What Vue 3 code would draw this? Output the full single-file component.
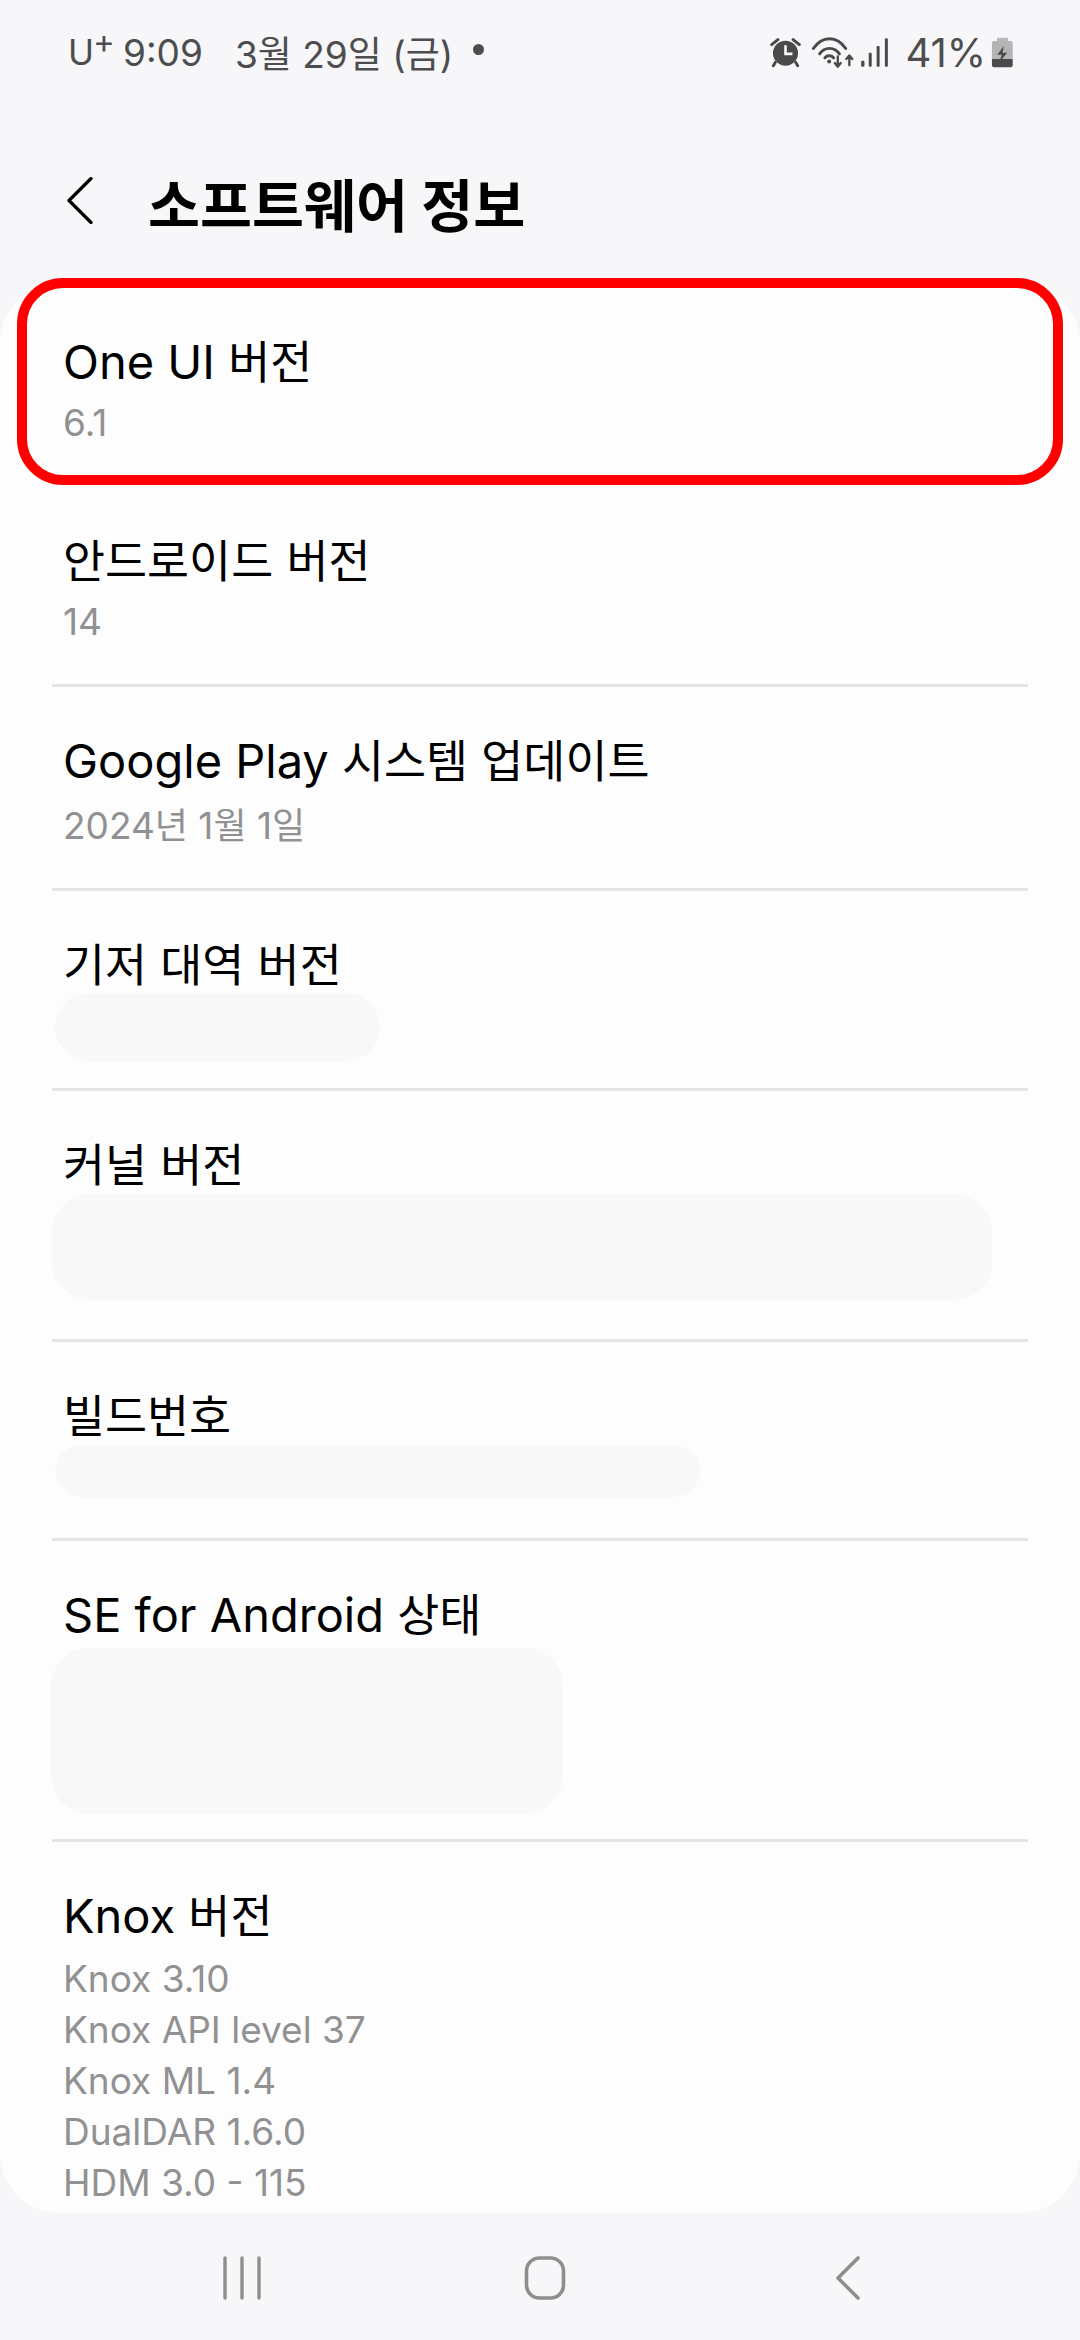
<script setup>
const rows = [
  { title: 'One UI 버전', subs: ['6.1'], height: 201, cls: 'row--first' },
  { title: '안드로이드 버전', subs: ['14'], height: 203, cls: 'row--second' },
  { title: 'Google Play 시스템 업데이트', subs: ['2024년 1월 1일'], height: 204, cls: 'row--date' },
  { title: '기저 대역 버전', height: 200, blob: { x: -8, w: 325, h: 68, gap: -3 } },
  { title: '커널 버전', height: 251, blob: { x: -11, w: 940, h: 106, gap: -2 } },
  { title: '빌드번호', height: 199, blob: { x: -8, w: 645, h: 52, gap: -2 } },
  { title: 'SE for Android 상태', height: 301, blob: { x: -12, w: 512, h: 166, gap: 2 } },
  { title: 'Knox 버전', subs: ['Knox 3.10', 'Knox API level 37', 'Knox ML 1.4', 'DualDAR 1.6.0', 'HDM 3.0 - 115'], last: true }
]

// Hangul runs sit slightly tighter than the Latin ones on this device font.
const runs = (text) =>
  text.split(/([\uac00-\ud7a3]+)/).filter(Boolean).map((t) => ({ t, ko: /[\uac00-\ud7a3]/.test(t) }))
</script>

<template>
  <div class="screen">
    <div class="status">
      <div class="status-left">
        <span class="carrier">U<span class="plus">+</span></span>
        <span class="time">9:09</span>
        <span class="date">3월 29일 (금)</span>
        <span class="dot"></span>
      </div>
      <div class="status-right">
        <svg class="ic-alarm" viewBox="88 66 94 100">
          <circle cx="135" cy="118" r="38" fill="#4a4a4c"/>
          <path d="M93 92 L112 77 M177 92 L158 77" stroke="#4a4a4c" stroke-width="9" stroke-linecap="round"/>
          <path d="M104 146 L98 156 M166 146 L172 156" stroke="#4a4a4c" stroke-width="9" stroke-linecap="round"/>
          <path d="M135 94 V120 H156" fill="none" stroke="#f7f7f9" stroke-width="8"/>
        </svg>
        <svg class="ic-wifi" viewBox="218 66 128 100">
          <g fill="none" stroke="#4a4a4c" stroke-width="9" stroke-linecap="round">
            <path d="M224 104 C250 64 296 64 322 104"/>
            <path d="M243 120 C258 98 288 98 303 120"/>
            <path d="M259 132 C266 124 278 124 285 132"/>
          </g>
          <circle cx="272" cy="143" r="6" fill="#4a4a4c"/>
          <g fill="none" stroke="#4a4a4c" stroke-width="7" stroke-linecap="round" stroke-linejoin="round">
            <path d="M298 128 V158 M289 148 L298 159 L307 148"/>
            <path d="M333 155 V126 M324 136 L333 125 L342 136"/>
          </g>
        </svg>
        <svg class="ic-signal" viewBox="370 68 90 94">
          <g fill="#4a4a4c">
            <rect x="373" y="140" width="10" height="18" rx="3"/>
            <rect x="396" y="116" width="9" height="42" rx="3"/>
            <rect x="420" y="95" width="9" height="63" rx="3"/>
            <rect x="445" y="72" width="9" height="86" rx="3"/>
          </g>
        </svg>
        <span class="percent">41%</span>
        <svg class="ic-battery" viewBox="748 68 68 94">
          <rect x="765" y="70" width="34" height="14" rx="4" fill="#b9b9bb"/>
          <rect x="750" y="80" width="63" height="56" rx="6" fill="#b4b4b6"/>
          <path d="M750 135 H813 V152 Q813 160 805 160 H758 Q750 160 750 152 Z" fill="#4a4a4c"/>
          <path d="M786 95 L766 122 H780 L772 145 L796 116 H782 Z" fill="#4a4a4c"/>
        </svg>
      </div>
    </div>

    <header class="header">
      <svg class="back" viewBox="0 0 28 47">
        <path d="M25 1.5 L3 23.5 L25 45.5" fill="none" stroke="#000" stroke-width="3.2" stroke-linecap="round" stroke-linejoin="round"/>
      </svg>
      <h1 class="title">소프트웨어 정보</h1>
    </header>

    <main class="main">
      <div class="card">
        <div v-for="row in rows" :key="row.title" class="row" :class="[row.cls, { 'row--last': row.last }]"
             :style="row.height ? { height: row.height + 'px' } : null">
          <div class="row-title"><span v-for="(r, i) in runs(row.title)" :key="i" :class="{ ko: r.ko }">{{ r.t }}</span></div>
          <div v-if="row.subs" class="subs">
            <div v-for="s in row.subs" :key="s" class="sub"><span v-for="(r, i) in runs(s)" :key="i" :class="{ ko: r.ko }">{{ r.t }}</span></div>
          </div>
          <div v-if="row.blob" class="blob"
               :style="{ marginLeft: row.blob.x + 'px', width: row.blob.w + 'px', height: row.blob.h + 'px', marginTop: row.blob.gap + 'px' }"></div>
        </div>
      </div>
      <div class="highlight"></div>
    </main>

    <nav class="nav">
      <div class="nav-item">
        <svg width="40" height="44" viewBox="0 0 40 44">
          <path d="M3 2 V42 M20 2 V42 M37 2 V42" stroke="#8e8e8e" stroke-width="3.4" stroke-linecap="round"/>
        </svg>
      </div>
      <div class="nav-item">
        <svg width="44" height="44" viewBox="0 0 44 44">
          <rect x="3.5" y="2" width="37" height="40" rx="13" fill="none" stroke="#8e8e8e" stroke-width="3.6"/>
        </svg>
      </div>
      <div class="nav-item">
        <svg width="26" height="44" viewBox="0 0 26 44">
          <path d="M23 2 L3 22 L23 42" fill="none" stroke="#8e8e8e" stroke-width="3.6" stroke-linecap="round" stroke-linejoin="round"/>
        </svg>
      </div>
    </nav>
  </div>
</template>

<style>
html, body { margin: 0; padding: 0; background: #f7f7f9; }
</style>

<style scoped>
.screen {
  width: 1080px;
  height: 2340px;
  display: flex;
  flex-direction: column;
  background: #f7f7f9;
  overflow: hidden;
  font-family: Inter, "Noto Sans CJK KR", sans-serif;
  color: #000;
}
.status {
  height: 100px;
  flex: none;
  display: flex;
  align-items: center;
  justify-content: space-between;
  padding: 4px 66px 0 68px;
  box-sizing: border-box;
  color: #4d4d4f;
  font-size: 37px;
}
.status-left { display: flex; align-items: center; }
.carrier { width: 55px; font-size: 35px; white-space: nowrap; }
.plus {
  font-size: 33px;
  line-height: 0;
  vertical-align: 12px;
  margin-left: -1px;
}
.time { width: 112px; }
.dot {
  width: 11px;
  height: 11px;
  border-radius: 50%;
  background: #4d4d4f;
  margin-left: 20px;
  margin-top: -6px;
}
.status-right { display: flex; align-items: center; }
.ic-alarm { width: 31px; height: 33px; }
.ic-wifi { width: 43px; height: 33px; margin-left: 10px; }
.ic-signal { width: 30px; height: 31px; margin-left: 6px; }
.percent { margin-left: 15px; font-size: 40px; }
.ic-battery { width: 23px; height: 31px; margin-left: 5px; }

.header {
  height: 183px;
  flex: none;
  display: flex;
  align-items: center;
  padding: 30px 0 0 66px;
  box-sizing: border-box;
}
.back { width: 28px; height: 47px; flex: none; margin-top: -13px; }
.title {
  margin: 0 0 0 54px;
  font-size: 56.5px;
  font-weight: 700;
  line-height: 70px;
  color: #000;
}

.main { flex: 1; position: relative; min-height: 0; }
.card {
  height: 100%;
  box-sizing: border-box;
  padding: 0 52px;
  background: #fdfdfe;
  border-radius: 60px;
  overflow: hidden;
}
.row {
  box-sizing: border-box;
  padding: 44px 0 0 11px;
  border-bottom: 3px solid #e4e4e6;
}
.row--first { padding-top: 49px; }
.row--first .subs { margin-top: 4px; }
.row--second { padding-top: 47px; }
.row--second .subs { margin-top: 4px; }
.row--last { border-bottom: none; }
.row-title {
  font-size: 47px;
  line-height: 60px;
  color: #000;
}
.row-title .ko { font-size: 45.7px; }
.subs { margin-top: 6px; }
.row--date .subs { margin-top: 8px; }
.sub {
  font-size: 37px;
  line-height: 51px;
  color: #919191;
}
.sub .ko { font-size: 36px; }
.blob {
  background: #f8f8f9;
  border-radius: 38px;
}
.highlight {
  position: absolute;
  left: 17px;
  top: -5px;
  width: 1046px;
  height: 207px;
  box-sizing: border-box;
  border: 10px solid #fe0000;
  border-radius: 46px;
  pointer-events: none;
}

.nav {
  height: 127px;
  flex: none;
  display: flex;
  align-items: center;
  justify-content: center;
  padding: 2px 0 0 10px;
  box-sizing: border-box;
}
.nav-item {
  width: 303px;
  display: flex;
  justify-content: center;
}
</style>
